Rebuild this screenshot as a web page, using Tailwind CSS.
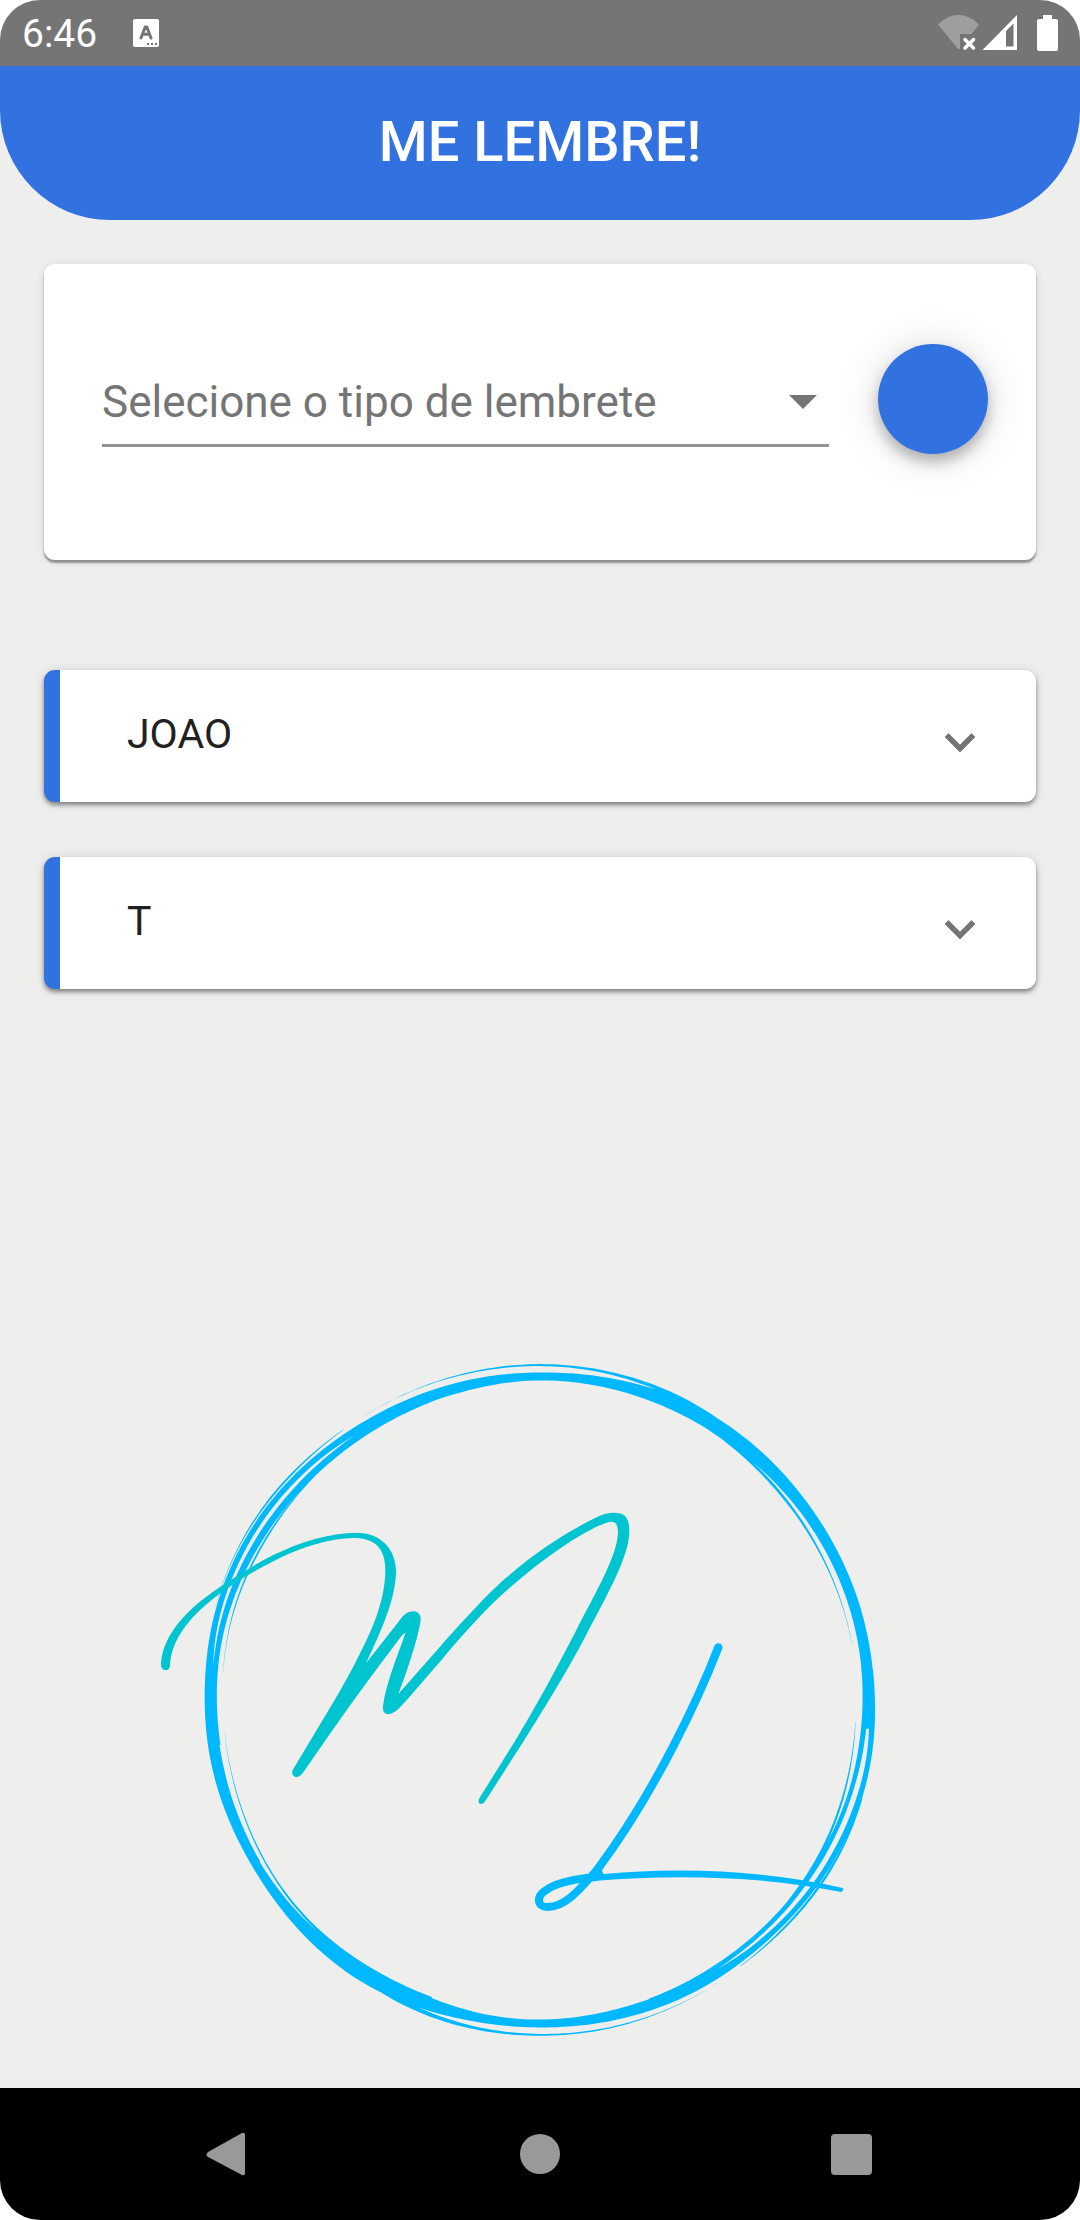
<!DOCTYPE html>
<html lang="pt-BR">
<head>
<meta charset="utf-8">
<meta name="viewport" content="width=device-width, initial-scale=1">
<title>Me Lembre!</title>
<script src="https://cdn.jsdelivr.net/npm/@tailwindcss/browser@4"></script>
</head>
<body class="bg-white font-[Roboto,sans-serif]">
<div class="flex min-h-screen flex-col overflow-hidden rounded-[40px] bg-[#eeeeec]">

  <!-- Status bar -->
  <div class="flex h-[66px] items-center justify-between bg-[#757575] pr-[22px] pl-[22px] text-white">
    <div class="flex items-center gap-[36px]">
      <span class="pt-[2px] text-[39px] leading-[64px]">6:46</span>
      <svg class="h-[28px] w-[26px]" viewBox="0 0 26 28" aria-hidden="true">
        <rect width="26" height="28" rx="2" fill="#fff"/>
        <path d="M8 19 12.200 8h1.600L18 19M9.600 15.200h6.800" fill="none" stroke="#757575" stroke-width="3" stroke-linecap="round" stroke-linejoin="round"/>
        <path d="M14 24h2v2h-2zM18 24h2v2h-2zM22 24h2v2h-2z" fill="#757575"/>
      </svg>
    </div>
    <div class="flex items-center">
      <svg class="h-[36px] w-[120px]" viewBox="938 15 120 36" aria-hidden="true">
        <path d="M958.500 49.500 938 24.500Q947 15 958.500 15T979 24.500L971.500 34H960V48.500z" fill="#9e9e9e"/>
        <path d="m965 39.500 8.500 8.500M973.500 39.500 965 48" stroke="#fff" stroke-width="3.500" stroke-linecap="round"/>
        <path fill-rule="evenodd" d="M1017 15v35h-34.500zM1006 31v15.500h7.500V23.500z" fill="#fff"/>
        <path d="M1043 15h9v4h4q2 0 2 2v28q0 2-2 2h-17q-2 0-2-2V21q0-2 2-2h4z" fill="#fff"/>
      </svg>
    </div>
  </div>

  <header class="flex h-[154px] items-center justify-center rounded-b-[110px] bg-[#3271e0] pb-[2px]">
    <h1 class="text-[56px] leading-[64px] font-medium text-white">ME LEMBRE!</h1>
  </header>

  <main class="flex flex-1 flex-col px-[44px] pt-[44px]">
    <form class="flex h-[296px] items-center gap-[49px] rounded-[11px] bg-white pr-[48px] pb-[26px] pl-[58px] shadow-[0_3px_2px_rgba(0,0,0,0.36),0_1px_10px_rgba(0,0,0,0.1)]">
      <div class="relative mt-[16px] flex-1">
        <select aria-label="Tipo de lembrete" class="h-[80px] w-full appearance-none border-b-[3px] border-[#949494] bg-transparent pb-[8px] text-[44px] leading-[64px] text-[#757575] outline-none">
          <option>Selecione o tipo de lembrete</option>
        </select>
        <svg class="pointer-events-none absolute top-[28px] right-[12px] h-[14px] w-[28px]" viewBox="0 0 28 14" aria-hidden="true"><path d="M0 0h28L14 14z" fill="#757575"/></svg>
      </div>
      <button type="button" aria-label="Adicionar lembrete" class="size-[110px] rounded-full bg-[#3271e0] shadow-[0_8px_14px_rgba(0,0,0,0.26),0_2px_44px_rgba(0,0,0,0.14)]"></button>
    </form>

    <ul class="mt-[110px] flex flex-col gap-[55px]">
      <li>
        <button type="button" aria-expanded="false" class="flex h-[132px] w-full items-center justify-between overflow-hidden rounded-[11px] border-l-[16px] border-[#3271e0] bg-white pr-[46px] pl-[67px] text-left shadow-[0_3px_4px_rgba(0,0,0,0.4),0_1px_12px_rgba(0,0,0,0.12)]">
          <span class="pb-[4px] text-[41px] leading-[48px] text-[#212121]">JOAO</span>
          <svg class="mt-[12px] size-[60px]" viewBox="0 0 24 24" fill="#757575" stroke="#757575" stroke-width=".3" aria-hidden="true"><path d="M16.590 8.590 12 13.170 7.410 8.590 6 10l6 6 6-6z"/></svg>
        </button>
      </li>
      <li>
        <button type="button" aria-expanded="false" class="flex h-[132px] w-full items-center justify-between overflow-hidden rounded-[11px] border-l-[16px] border-[#3271e0] bg-white pr-[46px] pl-[67px] text-left shadow-[0_3px_4px_rgba(0,0,0,0.4),0_1px_12px_rgba(0,0,0,0.12)]">
          <span class="pb-[4px] text-[41px] leading-[48px] text-[#212121]">T</span>
          <svg class="mt-[12px] size-[60px]" viewBox="0 0 24 24" fill="#757575" stroke="#757575" stroke-width=".3" aria-hidden="true"><path d="M16.590 8.590 12 13.170 7.410 8.590 6 10l6 6 6-6z"/></svg>
        </button>
      </li>
    </ul>

    <svg class="mx-auto mt-auto mb-[38px] w-full max-w-[780px]" viewBox="30 30 2340 2100" role="img" aria-label="Logotipo Me Lembre">
      <path id="ring" fill="#00b8ff"/>
      <g fill="none" stroke="#00b8ff" stroke-linecap="round" stroke-linejoin="round">
        <path stroke-width="25" d="M1735 922C1680 1065 1550 1350 1371 1590"/>
        <path stroke-width="24" d="M1371 1590C1325 1640 1280 1701 1223 1701C1190 1701 1190 1670 1213 1654C1245 1628 1310 1616 1368 1611"/>
      </g>
      <path fill="#00b8ff" d="M1340 1601Q1370 1606 1388 1584Q1384 1598 1392 1602C1620 1580 1880 1592 2108 1644Q2112 1652 2104 1656C1870 1610 1620 1600 1350 1624z"/>
      <path fill="#00c4cf" d="M63 975C65 900 120 820 240 741C300 702 350 670 400 645C480 606 570 578 650 578C720 578 770 625 768 700C765 780 725 870 678 970L786 832C805 805 845 808 842 840C835 890 805 985 775 1062L900 920C985 825 1040 765 1100 712C1200 625 1290 572 1365 534C1400 515 1440 514 1455 528C1472 545 1470 585 1462 618C1445 690 1380 805 1340 882C1290 980 1210 1110 1153 1200L1036 1383Q1029 1395 1019 1391Q1013 1386 1018 1375L1127 1200C1190 1095 1250 985 1308 872C1370 752 1430 650 1434 580C1434 550 1425 540 1400 548C1370 557 1310 592 1280 612C1200 665 1145 712 1088 762C1020 825 950 905 900 965C860 1010 810 1070 780 1102C755 1130 725 1130 729 1098C736 1040 765 965 797 878Q793 878 786 886C700 1000 630 1095 557 1200L490 1297Q477 1315 464 1310Q453 1304 458 1290L512 1200C560 1120 610 1040 650 960C700 865 735 780 736 690C736 625 705 594 640 594C570 594 480 622 400 664C350 690 310 712 265 743C180 800 95 880 90 975Q89 991 77 991Q63 990 63 975z"/>
    </svg>
  </main>

  <!-- System navigation -->
  <nav class="flex h-[132px] items-center justify-between bg-black px-[19%]" aria-label="Sistema">
    <button type="button" aria-label="Voltar"><svg class="size-[44px]" viewBox="0 0 44 44" fill="#999"><path d="M3 20 37 1q3-1 3 2v38q0 3-3 2L3 25q-3-2 0-5z"/></svg></button>
    <button type="button" aria-label="Início"><svg class="size-[44px]" viewBox="0 0 44 44" fill="#999"><circle cx="22" cy="22" r="20"/></svg></button>
    <button type="button" aria-label="Recentes"><svg class="size-[44px]" viewBox="0 0 44 44" fill="#999"><rect x="0" y="2" width="41" height="41" rx="4"/></svg></button>
  </nav>
</div>

<script>
  // Brush strands of the ring: [angle clockwise from the top, outer radius, inner radius]
  const strands = [
    [[328,334,334],[342,335,334.5],[348,335.5,334],[360,336,334],[364,336,334],[376,335.5,332.5],[382,335,331],[390,334,330],[400,330,326]],
    [[148,334,334],[157,335,334.5],[169,336,334.5],[180,335.5,334],[192,336,333],[197.5,335.5,331.5],[205,334.5,330],[216,330,326]],
    [[240,332,323],[262,335.5,323.5],[270,335,324],[275,335.5,329],[280,336.5,331],[287,337,331.5],[296,336.5,331],[306,335,329.5],[315,332.5,327],[322,330.5,325],[329,329,321],[336,328.5,317],[342,328,317],[348,328,318],[360,327,320],[376,330,319],[382,332,318.5],[390,333,318.5],[396,333,318.5],[405,332.5,319.5],[413,332,321],[423,332.5,322],[433,333.5,323],[445,334,323],[455,335,323]],
    [[262,327,322.5],[280,329,324],[287,329,323],[296,327.5,321],[306,325.5,319],[315,324,317.5],[322,323,316.5],[329,323,316.5],[342,324,317],[352,325,321]],
    [[275,318,318],[287,320,319],[296,319,317],[306,318.5,317],[316,318,317.5]],
    [[286,338,338],[300,338.5,337.5],[306,338,336],[315,336,334],[324,334,334]],
    [[388,322,319],[396,320,318],[405,318.5,315.5],[413,318,315.5],[423,317,315.5],[433,317,316.5],[440,317,317]],
    [[85,334,325],[91,335,329],[98,336.5,332],[107,337,331.5],[117,335.5,330],[124,334,329],[135,331,326],[143,330.5,324],[151,330.5,320],[157,330,318],[169,328.5,318.5],[180,327,320],[192,328,319],[197.5,329,317.5],[205,332,316],[211,334,316],[217,334,318],[225,333.5,322],[235,332,323],[246,332.5,324.5],[258,334.5,324.5],[270,335,323],[276,335,329]],
    [[107,337,336],[117,338,336],[124,337,334.5],[135,334.5,332.5],[143,333,333]],
    [[84,329,323],[98.5,327,322],[107,326,322],[117,325,320.5],[124,324,319.5],[135,323,318.5],[143,322,317.5],[151,322,317.5],[160,324,318]],
    [[94,316,316],[107,319,317],[117,321,318.5],[124,321,318.5],[136,320,319.5]],
    [[200,319,316],[211,319,316],[217,320,317.5],[225,321.5,319],[235,320.5,319],[250,318,317],[258,317,316.5],[264,317,317]]
  ];
  const valueAt = (strand, deg, col) => {
    if (deg <= strand[0][0]) return strand[0][col];
    for (let i = 1; i < strand.length; i++) {
      const a = strand[i - 1], b = strand[i];
      if (deg <= b[0]) return a[col] + (b[col] - a[col]) * (deg - a[0]) / (b[0] - a[0]);
    }
    return strand[strand.length - 1][col];
  };
  // Weighted mean over the neighbouring degrees keeps every edge an even curve
  const smooth = (strand, deg, col) => {
    let sum = 0, weight = 0;
    for (let k = -12; k <= 12; k++) {
      const w = Math.exp(-k * k / 50);
      sum += w * valueAt(strand, deg + k, col);
      weight += w;
    }
    return sum / weight;
  };
  const point = (deg, r) => {
    const a = deg * Math.PI / 180;
    return (1200 + 3 * r * Math.sin(a)).toFixed(1) + ' ' + (1080 - 3 * r * Math.cos(a)).toFixed(1);
  };
  const outline = strand => {
    const outer = [], inner = [];
    for (let deg = strand[0][0]; deg <= strand[strand.length - 1][0]; deg++) {
      outer.push(point(deg, smooth(strand, deg, 1)));
      inner.unshift(point(deg, smooth(strand, deg, 2)));
    }
    return 'M' + outer.concat(inner).join('L') + 'Z';
  };
  document.getElementById('ring').setAttribute('d', strands.map(outline).join(''));
</script>
</body>
</html>
